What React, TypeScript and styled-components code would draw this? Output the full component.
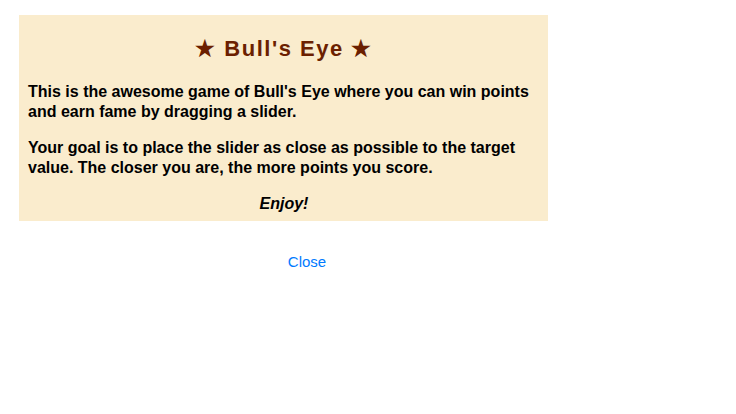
import React from "react";
import styled, { createGlobalStyle } from "styled-components";

const GlobalStyle = createGlobalStyle`
  body {
    margin: 0;
    background: #ffffff;
    font-family: "Liberation Sans", Arial, sans-serif;
  }
`;

const Page = styled.div`
  width: 736px;
  height: 414px;
  padding-top: 15px;
  box-sizing: border-box;
`;

const Panel = styled.div`
  width: 529px;
  margin-left: 19px;
  padding: 21px 8px 7px 9px;
  box-sizing: border-box;
  background: #faeccd;
  display: flex;
  flex-direction: column;
`;

const Title = styled.h1`
  margin: 0;
  font-size: 22px;
  line-height: 26px;
  font-weight: bold;
  letter-spacing: 1.5px;
  color: #6b1f00;
  text-align: center;
`;

const Text = styled.p<{ $italic?: boolean; $center?: boolean }>`
  margin: 16px 0 0;
  font-size: 16px;
  line-height: 20px;
  font-weight: bold;
  color: #000000;
  font-style: ${(p) => (p.$italic ? "italic" : "normal")};
  text-align: ${(p) => (p.$center ? "center" : "left")};

  &:first-of-type {
    margin-top: 20px;
  }
`;

const Footer = styled.div`
  width: 574px;
  margin-left: 20px;
  margin-top: 31px;
  display: flex;
  justify-content: center;
`;

const CloseButton = styled.button`
  border: none;
  background: transparent;
  padding: 0;
  font-family: "Liberation Sans", Arial, sans-serif;
  font-size: 15px;
  line-height: 20px;
  color: #007aff;
  cursor: pointer;
`;

const App: React.FC = () => {
  return (
    <>
      <GlobalStyle />
      <Page>
        <Panel>
          <Title>★ Bull's Eye ★</Title>
          <Text>
            This is the awesome game of Bull's Eye where you can win points
            and earn fame by dragging a slider.
          </Text>
          <Text>
            Your goal is to place the slider as close as possible to the target
            value. The closer you are, the more points you score.
          </Text>
          <Text $italic $center>
            Enjoy!
          </Text>
        </Panel>
        <Footer>
          <CloseButton>Close</CloseButton>
        </Footer>
      </Page>
    </>
  );
};

export default App;
